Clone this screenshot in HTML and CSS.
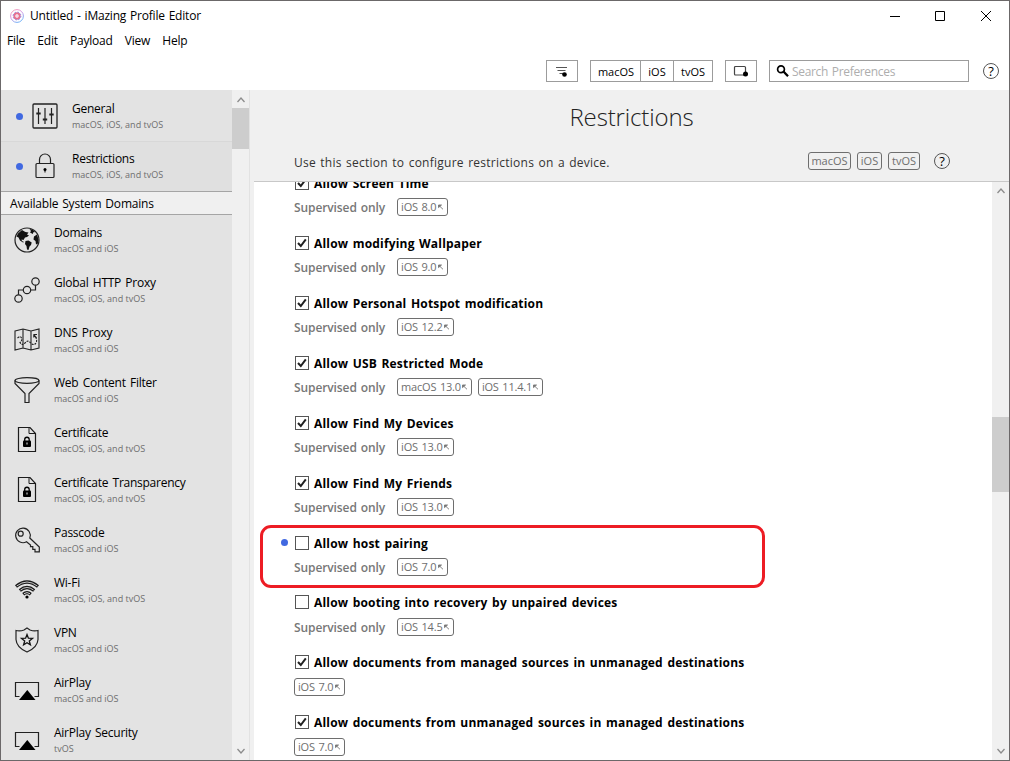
FILE: index.html
```html
<!DOCTYPE html>
<html lang="en">
<head>
<meta charset="utf-8">
<title>Untitled - iMazing Profile Editor</title>
<link rel="stylesheet" href="styles.css">
</head>
<body>
<svg width="0" height="0" class="defs">
  <defs>
    <symbol id="doc-lock" viewBox="0 0 28 28"><path d="M5.500 1.500h11.500l5.500 6v18h-17z" fill="none" stroke="#1c1c1c" stroke-width="1.200"/><path d="M16 2v5.500h6" fill="none" stroke="#1c1c1c"/><rect x="10" y="14.500" width="8" height="6.500" rx="1" fill="#000"/><path d="M11.700 15v-1.500a2.200 2.200 0 0 1 4.500 0V15" fill="none" stroke="#000" stroke-width="1.300"/><path d="M14 16.500v2" stroke="#eee"/></symbol>
    <symbol id="airplay" viewBox="0 0 28 28"><path d="M6.500 20.500H2.500v-14h23v14h-4" fill="none" stroke="#222" stroke-width="1.200"/><path d="M6 24l8.300-10L22.500 24z" fill="#000"/></symbol>
    <symbol id="check" viewBox="0 0 12 12"><path d="M2 6l2.800 3L9.800 2.300" fill="none" stroke="#222" stroke-width="2"/></symbol>
    <symbol id="up" viewBox="0 0 10 10"><path d="M1.500 7L5 3l3.500 4" fill="none" stroke="#8c8c8c" stroke-width="1.300"/></symbol>
    <symbol id="down" viewBox="0 0 10 10"><path d="M1.500 3L5 7l3.500-4" fill="none" stroke="#8c8c8c" stroke-width="1.300"/></symbol>
    <symbol id="arrow" viewBox="0 0 6 8"><path d="M.5 4.600V2h3zM1.500 3L5 6.300" fill="#777" stroke="#777" stroke-width=".9"/></symbol>
  </defs>
</svg>
<div class="window">
  <header class="titlebar">
    <svg class="app-icon" viewBox="0 0 14 14"><defs><linearGradient id="g" x1="0" y1="0" x2=".6" y2="1"><stop offset="0" stop-color="#ff8fa0"/><stop offset=".5" stop-color="#d18be0"/><stop offset="1" stop-color="#62a8f5"/></linearGradient></defs><circle cx="7" cy="7" r="6.400" fill="none" stroke="url(#g)" stroke-width=".9"/><circle cx="7" cy="7" r="2.700" fill="none" stroke="#e8708c" stroke-width="2"/><circle cx="7" cy="7" r="3.900" fill="none" stroke="#9080e0" stroke-width="1" stroke-dasharray="1.600 1.460"/><circle cx="7" cy="7" r="1.200" fill="#f6d6ea"/></svg>
    <span class="title">Untitled - iMazing Profile Editor</span>
    <svg class="controls" viewBox="0 0 112 20"><path d="M0 10.500h10M45.500 5.500h9v9h-9zM91 5l10 10M101 5L91 15" fill="none" stroke="#000" stroke-width="1"/></svg>
  </header>
  <nav class="menu"><span>File</span><span>Edit</span><span>Payload</span><span>View</span><span>Help</span></nav>
  <div class="toolbar">
    <button class="btn filter"><svg width="14" height="12" viewBox="0 0 14 12"><path d="M1 2.500h11M2.500 5.500h8M4.500 8.500h5" stroke="#555" stroke-width="1.200"/><circle cx="9.500" cy="9.500" r="2.300"/></svg></button>
    <div class="segments"><span class="mac">macOS</span><span class="ios">iOS</span><span class="tv">tvOS</span></div>
    <button class="btn device"><svg width="16" height="12" viewBox="0 0 16 12"><rect x="1.500" y="1.500" width="11" height="8.500" rx="1" fill="none" stroke="#444" stroke-width="1.200"/><circle cx="12.500" cy="9" r="2.500"/></svg></button>
    <div class="search"><svg width="14" height="14" viewBox="0 0 14 14"><circle cx="5" cy="5.200" r="3.400" fill="none" stroke="#000" stroke-width="1.700"/><path d="M7.500 7.500l4.500 4.700" stroke="#000" stroke-width="2.300"/></svg><span class="placeholder">Search Preferences</span></div>
    <span class="help">?</span>
  </div>
  <div class="body">
    <aside class="sidebar">
      <div class="nav">
        <div class="row active"><i class="dot"></i><svg viewBox="0 0 28 28"><rect x="2" y="2" width="24" height="24" rx="1" fill="none" stroke="#222" stroke-width="1.300"/><path d="M7.500 6v16M14 6v16M20.500 6v16" stroke="#222" stroke-width="1.200"/><path d="M5.300 11.500h4.400M11.800 17.500h4.400M18.300 12.500h4.400" stroke="#222" stroke-width="2.200"/></svg><div class="label"><b>General</b><small>macOS, iOS, and tvOS</small></div></div>
        <div class="row active selected"><i class="dot"></i><svg viewBox="0 0 28 28"><rect x="5" y="11.500" width="18" height="14" rx="1" fill="none" stroke="#222" stroke-width="1.200"/><path d="M8.500 11V7.500a5.500 5.500 0 0 1 11 0V11" fill="none" stroke="#222" stroke-width="1.200"/><circle cx="14" cy="17.500" r="1.500"/><path d="M14 17.500v3" stroke="#000"/></svg><div class="label"><b>Restrictions</b><small>macOS, iOS, and tvOS</small></div></div>
        <div class="section">Available System Domains</div>
        <div class="row"><svg viewBox="0 0 28 28"><circle cx="14" cy="14" r="12" fill="none" stroke="#222" stroke-width="1.200"/><path d="M5 7.500L9 4l2.500 1.500 1 .5 3 .5-1.500 2 2 1-2 1.500-2 .5-1.500 2.500-2-.5.500 1.500 2 1-1 .5-3-2-1.500-3-2-1zM12.500 15l3-.5 3.200 2-.7 2.500-1.500 1.500-1 3.500-1.500-.5-.5-3.500-1.500-2zM16.500 3l3 .5 2.500 2.500-2 .5 0 1.500-3-1.500 1-1.500zM21 10.500l3-2 1.500 5-.5 4-2 1-.5-3.500-2-1.500z" fill="#111"/></svg><div class="label"><b>Domains</b><small>macOS and iOS</small></div></div>
        <div class="row"><svg viewBox="0 0 28 28"><g fill="none" stroke="#222" stroke-width="1.200"><circle cx="5.500" cy="22.500" r="3.700"/><circle cx="14" cy="14" r="3.700"/><circle cx="22.500" cy="5.500" r="3.700"/><path d="M5.500 18.800V14h4.800M17.700 14h4.800V9.200"/></g></svg><div class="label"><b>Global HTTP Proxy</b><small>macOS, iOS, and tvOS</small></div></div>
        <div class="row"><svg viewBox="0 0 28 28"><path d="M2 5l8-2 8 2 8-2v19l-8 2-8-2-8 2zM10 3v19M18 5v19" fill="none" stroke="#222" stroke-width="1.100"/><path d="M4.500 12q3-2.500 4 0t-1.500 4.500q2 3.500 5 .5 3-4 6 .5 4 2.500 5.500-1.500.5-3-1-5" fill="none" stroke="#222" stroke-width="1.100" stroke-dasharray="2 1"/><path d="M20.500 8.500h3.500M20.800 8.500v3M21 8.800l2.500 3" fill="none" stroke="#222" stroke-width="1.100"/></svg><div class="label"><b>DNS Proxy</b><small>macOS and iOS</small></div></div>
        <div class="row"><svg viewBox="0 0 28 28"><path d="M2 4.500v3l10 10v9h4v-9l10-10v-3" fill="none" stroke="#222" stroke-width="1.200"/><ellipse cx="14" cy="4.500" rx="12" ry="2.800" fill="none" stroke="#222" stroke-width="1.200"/></svg><div class="label"><b>Web Content Filter</b><small>macOS and iOS</small></div></div>
        <div class="row"><svg><use href="#doc-lock"/></svg><div class="label"><b>Certificate</b><small>macOS, iOS, and tvOS</small></div></div>
        <div class="row"><svg><use href="#doc-lock"/></svg><div class="label"><b>Certificate Transparency</b><small>macOS, iOS, and tvOS</small></div></div>
        <div class="row"><svg viewBox="0 0 28 28"><path d="M13.500 15.800a7.300 7.300 0 1 1 3.300-3.800L26.300 21v4.800h-4.300v-2.400h-2.200v-2.700h-2.300v-1.600z" fill="none" stroke="#222" stroke-width="1.200"/><circle cx="7.700" cy="7.700" r="2.500" fill="none" stroke="#222" stroke-width="1.200"/></svg><div class="label"><b>Passcode</b><small>macOS and iOS</small></div></div>
        <div class="row"><svg viewBox="0 0 28 28"><g fill="none" stroke="#1a1a1a" stroke-width="3.200"><path d="M3 10.500q11-9 22 0M6.800 14.500q7.200-6 14.400 0M10.200 18.200q3.800-3 7.600 0"/></g><g fill="none" stroke="#c8c8c8" stroke-width="1"><path d="M3.700 10q10.300-8 20.600 0M7.500 14q6.500-5 13 0M11 17.700q3-2.200 6 0"/></g><circle cx="14" cy="21" r="1.600"/></svg><div class="label"><b>Wi-Fi</b><small>macOS, iOS, and tvOS</small></div></div>
        <div class="row"><svg viewBox="0 0 28 28"><path d="M14 2l3 2q4 1.500 8 .5v9q-.5 8-11 12.500Q3.500 21.500 3 13.500v-9q4 1 8-.5z" fill="none" stroke="#222" stroke-width="1.200"/><path d="M14 8.500l1.400 3.700 4.100.2-3.200 2.500 1.100 4-3.400-2.200-3.400 2.200 1.100-4-3.200-2.500 4.100-.2z" fill="none" stroke="#111" stroke-width="1.300"/></svg><div class="label"><b>VPN</b><small>macOS and iOS</small></div></div>
        <div class="row"><svg><use href="#airplay"/></svg><div class="label"><b>AirPlay</b><small>macOS and iOS</small></div></div>
        <div class="row"><svg><use href="#airplay"/></svg><div class="label"><b>AirPlay Security</b><small>tvOS</small></div></div>
      </div>
      <div class="scroll side-scroll"><svg><use href="#up"/></svg><i class="thumb"></i><span class="grow"></span><svg><use href="#down"/></svg></div>
    </aside>
    <main class="main">
      <div class="head">
        <h1>Restrictions</h1>
        <div class="intro"><p>Use this section to configure restrictions on a device.</p><span class="tag mac">macOS</span><span class="tag ios">iOS</span><span class="tag tv">tvOS</span><span class="help">?</span></div>
      </div>
      <div class="content">
        <div class="list">
          <div class="item"><div class="opt"><svg class="box"><use href="#check"/></svg><strong>Allow Screen Time</strong></div><div class="meta"><em>Supervised only</em><span class="ver">iOS 8.0<svg><use href="#arrow"/></svg></span></div></div>
          <div class="item"><div class="opt"><svg class="box"><use href="#check"/></svg><strong>Allow modifying Wallpaper</strong></div><div class="meta"><em>Supervised only</em><span class="ver">iOS 9.0<svg><use href="#arrow"/></svg></span></div></div>
          <div class="item"><div class="opt"><svg class="box"><use href="#check"/></svg><strong>Allow Personal Hotspot modification</strong></div><div class="meta"><em>Supervised only</em><span class="ver">iOS 12.2<svg><use href="#arrow"/></svg></span></div></div>
          <div class="item"><div class="opt"><svg class="box"><use href="#check"/></svg><strong>Allow USB Restricted Mode</strong></div><div class="meta"><em>Supervised only</em><span class="ver">macOS 13.0<svg><use href="#arrow"/></svg></span><span class="ver">iOS 11.4.1<svg><use href="#arrow"/></svg></span></div></div>
          <div class="item"><div class="opt"><svg class="box"><use href="#check"/></svg><strong>Allow Find My Devices</strong></div><div class="meta"><em>Supervised only</em><span class="ver">iOS 13.0<svg><use href="#arrow"/></svg></span></div></div>
          <div class="item"><div class="opt"><svg class="box"><use href="#check"/></svg><strong>Allow Find My Friends</strong></div><div class="meta"><em>Supervised only</em><span class="ver">iOS 13.0<svg><use href="#arrow"/></svg></span></div></div>
          <div class="item marked"><div class="opt"><svg class="box"></svg><strong>Allow host pairing</strong></div><div class="meta"><em>Supervised only</em><span class="ver">iOS 7.0<svg><use href="#arrow"/></svg></span></div></div>
          <div class="item late"><div class="opt"><svg class="box"></svg><strong>Allow booting into recovery by unpaired devices</strong></div><div class="meta"><em>Supervised only</em><span class="ver">iOS 14.5<svg><use href="#arrow"/></svg></span></div></div>
          <div class="item late"><div class="opt"><svg class="box"><use href="#check"/></svg><strong>Allow documents from managed sources in unmanaged destinations</strong></div><div class="meta"><span class="ver">iOS 7.0<svg><use href="#arrow"/></svg></span></div></div>
          <div class="item late"><div class="opt"><svg class="box"><use href="#check"/></svg><strong>Allow documents from unmanaged sources in managed destinations</strong></div><div class="meta"><span class="ver">iOS 7.0<svg><use href="#arrow"/></svg></span></div></div>
        </div>
        <div class="scroll main-scroll"><svg><use href="#up"/></svg><span class="gap"></span><i class="thumb"></i><span class="grow"></span><svg><use href="#down"/></svg></div>
      </div>
    </main>
  </div>
</div>
</body>
</html>
```
FILE: styles.css
```css
*, *::before, *::after { box-sizing: border-box; }
body { margin: 0; background: #fff; color: #000; font: 12px/16px "Open Sans", "Noto Sans", sans-serif; overflow: hidden; }
.defs { display: block; position: absolute; }
.window { width: 1010px; height: 761px; border: 1px solid #6b6869; background: #fff; display: flex; flex-direction: column; overflow: hidden; }

.titlebar { height: 29px; flex: none; display: flex; align-items: center; padding-left: 9px; }
.app-icon { width: 14px; height: 14px; margin-right: 6px; }
.title { flex: 1; letter-spacing: -.21px; word-spacing: 1px; }
.controls { width: 112px; height: 20px; margin-right: 7px; }

.menu { height: 22px; flex: none; display: flex; align-items: center; gap: 12.2px; padding-left: 6px; letter-spacing: -.22px; }
.toolbar { height: 38px; flex: none; display: flex; align-items: flex-start; padding: 8px 9px 0 545px; }
.btn { height: 22px; width: 32px; padding: 0; border: 1px solid #9c9c9c; background: #fff; display: flex; align-items: center; justify-content: center; }
.filter { margin-right: 12px; }
.segments { height: 22px; display: flex; border: 1px solid #9c9c9c; margin-right: 12px; font-size: 11px; line-height: 22px; text-align: center; }
.segments .mac { width: 49px; padding-left: 1px; }
.segments .ios { width: 33px; border-left: 1px solid #9c9c9c; }
.segments .tv { width: 39px; border-left: 1px solid #9c9c9c; }
.device { margin-right: 12px; }
.search { width: 200px; height: 22px; border: 1px solid #9c9c9c; padding-left: 6px; display: flex; align-items: center; gap: 2px; color: #aeaeae; }
.placeholder { letter-spacing: -.33px; word-spacing: 1px; padding-top: 1px; }
.help { width: 16px; height: 16px; border: 1px solid #555; border-radius: 50%; font-size: 13px; line-height: 14px; text-align: center; color: #000; }
.toolbar .help { margin: 3px 0 0 14px; }

.body { flex: 1; min-height: 0; display: flex; }
.sidebar { width: 253px; flex: none; display: flex; background: #f0f0f0; overflow: hidden; }
.nav { width: 231px; background: #e3e3e3; overflow: hidden; padding-top: 1px; }
.row { height: 50px; display: flex; padding: 11px 0 0 12px; gap: 13px; }
.row svg { width: 28px; height: 28px; flex: none; }
.label { display: flex; flex-direction: column; margin-top: -1px; white-space: nowrap; }
.label b { font-weight: 400; line-height: 16px; letter-spacing: -.25px; word-spacing: 1.4px; }
.label small { font-size: 9px; line-height: 16px; color: #6e6e6e; }
.active { padding-left: 15px; gap: 0; }
.active svg { margin: 0 13px 0 8px; }
.dot { width: 7px; height: 7px; border-radius: 50%; background: #4169e1; margin-top: 11px; flex: none; }
.selected { background: #e0e0e0; border-top: 1px solid #d8d8d8; padding-top: 10px; }
.section { height: 24px; line-height: 23px; padding-left: 9px; background: #f0f0f0; border-top: 1px solid #a5a5a5; border-bottom: 1px solid #a5a5a5; letter-spacing: -.2px; word-spacing: 1px; }

.scroll { width: 17px; background: #f0f0f0; display: flex; flex-direction: column; align-items: center; flex: none; }
.scroll svg { width: 10px; height: 10px; margin: 4px 0; flex: none; }
.thumb { width: 17px; background: #cdcdcd; flex: none; }
.side-scroll { width: 18px; border-right: 1px solid #e2e2e2; }
.side-scroll svg:first-child { margin: 5px 0 3px; }
.side-scroll .thumb { height: 41px; }
.main-scroll .thumb { height: 75px; }
.gap { height: 217px; flex: none; }
.grow { flex: 1; }

.main { flex: 1; min-width: 0; display: flex; flex-direction: column; }
.head { height: 92px; flex: none; background: #f0f0f0; border-bottom: 1px solid #c8c8c8; }
h1 { margin: 0; padding-top: 10px; font-size: 24px; line-height: 34px; font-weight: 300; text-align: center; color: #222; letter-spacing: -.14px; }
.intro { display: flex; align-items: center; padding: 17px 59px 0 40px; height: 37px; color: #333; }
.intro p { margin: 0; flex: 1; padding-top: 3px; letter-spacing: .25px; word-spacing: 1px; }
.tag { height: 18px; border: 1px solid #6e6e6e; border-radius: 3px; color: #6e6e6e; font-size: 11px; line-height: 16px; text-align: center; margin-right: 6px; }
.tag.mac { width: 43px; }
.tag.ios { width: 25px; }
.tag.tv { width: 32px; }
.intro .help { margin-left: 8px; }

.content { flex: 1; min-height: 0; display: flex; overflow: hidden; }
.list { flex: 1; min-width: 0; height: 578px; overflow: hidden; padding-left: 40px; }
.item { height: 60px; position: relative; }
.item:first-child { margin-top: -8px; }
.opt { height: 20px; display: flex; align-items: center; gap: 5px; padding-left: 1px; }
.late .opt { margin-top: -1px; margin-bottom: 5px; }
.item.late { display: flow-root; }
.box { width: 14px; height: 14px; border: 1px solid #555; background: #fff; flex: none; margin-top: -2px; }
strong { font-weight: 700; white-space: nowrap; letter-spacing: .18px; word-spacing: 1.2px; }
.meta { display: flex; align-items: center; height: 18px; margin-top: 4px; }
.meta em { font-style: normal; font-weight: 600; color: #777; margin-right: 12px; padding-top: 2px; white-space: nowrap; letter-spacing: -.1px; word-spacing: 1px; }
.ver { height: 18px; min-width: 51px; display: flex; align-items: center; justify-content: space-between; border: 1px solid #6e6e6e; border-radius: 3px; padding: 0 3px 0 3px; margin-right: 6px; color: #6e6e6e; font-size: 11px; line-height: 16px; letter-spacing: -.2px; word-spacing: 1px; white-space: nowrap; }
.ver svg { width: 6px; height: 8px; margin-left: 1px; }
.marked::before { content: ""; position: absolute; left: -13px; top: 5px; width: 7px; height: 7px; border-radius: 50%; background: #4169e1; }
.marked::after { content: ""; position: absolute; left: -34px; top: -9px; width: 505px; height: 63px; border: 3px solid #ed1c24; border-radius: 11px; }
```
